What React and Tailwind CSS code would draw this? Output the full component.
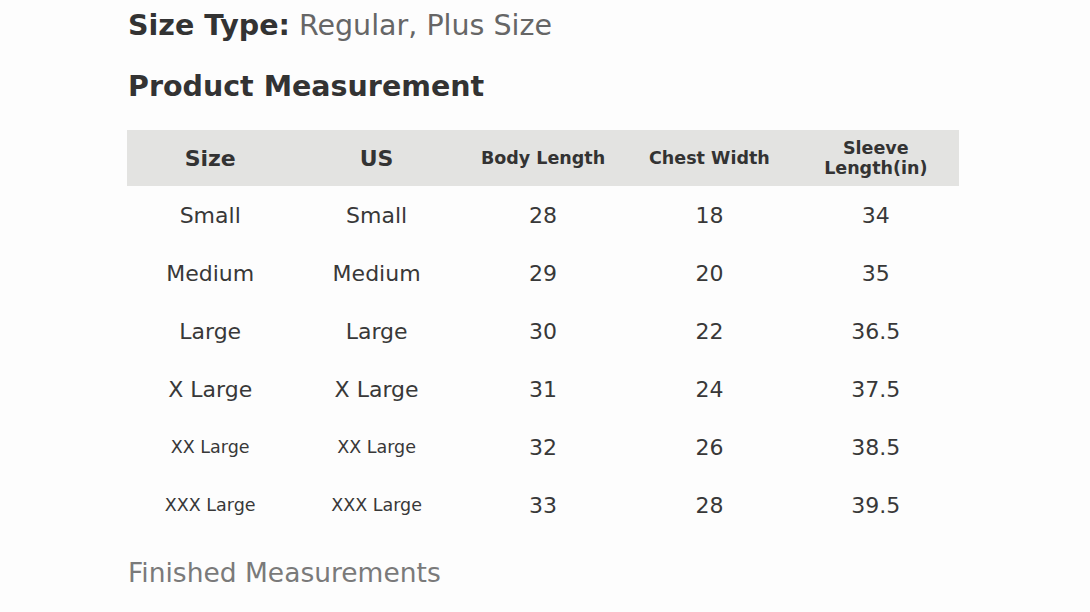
const rows = [
  { size: 'Small', us: 'Small', body: '28', chest: '18', sleeve: '34' },
  { size: 'Medium', us: 'Medium', body: '29', chest: '20', sleeve: '35' },
  { size: 'Large', us: 'Large', body: '30', chest: '22', sleeve: '36.5' },
  { size: 'X Large', us: 'X Large', body: '31', chest: '24', sleeve: '37.5' },
  { size: 'XX Large', us: 'XX Large', body: '32', chest: '26', sleeve: '38.5', small: true },
  { size: 'XXX Large', us: 'XXX Large', body: '33', chest: '28', sleeve: '39.5', small: true },
];

export default function App() {
  return (
    <div className="w-[1090px] h-[612px] overflow-hidden bg-[#fdfdfd] text-[#333] font-['DejaVu_Sans',sans-serif]">
      <div className="pl-[128px] pt-[9px]">
        <p className="text-[28.5px] leading-[34px]">
          <span className="font-bold text-[#333]">Size Type:</span>{' '}
          <span className="text-[#666]">Regular, Plus Size</span>
        </p>
        <h2 className="mt-[27px] text-[28.5px] leading-[34px] font-bold text-[#333]">Product Measurement</h2>

        <div className="mt-[26px] -ml-[1px] w-[832px]">
          <div className="grid grid-cols-5 h-[56px] bg-[#e3e3e1] items-center text-center font-bold">
            <div className="text-[22px]">Size</div>
            <div className="text-[22px]">US</div>
            <div className="text-[17.5px]">Body Length</div>
            <div className="text-[17.5px]">Chest Width</div>
            <div className="text-[17.5px] leading-[20px]">Sleeve<br />Length(in)</div>
          </div>
          {rows.map((r) => (
            <div key={r.size} className="grid grid-cols-5 h-[58px] items-center text-center text-[22px] text-[#383838]">
              <div className={r.small ? 'text-[17.5px]' : ''}>{r.size}</div>
              <div className={r.small ? 'text-[17.5px]' : ''}>{r.us}</div>
              <div>{r.body}</div>
              <div>{r.chest}</div>
              <div>{r.sleeve}</div>
            </div>
          ))}
        </div>

        <p className="mt-[24px] text-[26.5px] leading-[30px] text-[#7a7a7a]">Finished Measurements</p>
      </div>
    </div>
  );
}
